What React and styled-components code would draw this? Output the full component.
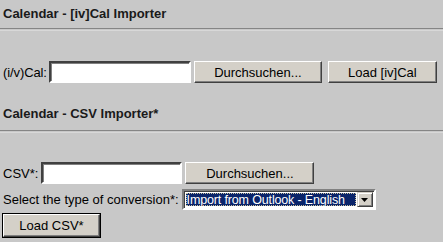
import React from 'react';
import styled, { createGlobalStyle } from 'styled-components';

const GlobalStyle = createGlobalStyle`
  html, body {
    margin: 0;
    padding: 0;
    background: #c8c8c8;
  }
  body {
    font-family: "Liberation Sans", Arial, sans-serif;
    font-size: 13px;
    color: #000;
  }
`;

const Page = styled.div`
  width: 443px;
  height: 242px;
  overflow: hidden;
  background: #c8c8c8;
`;

const Heading = styled.div`
  padding: ${p => p.top}px 3px 0;
  font-weight: bold;
  font-size: 13px;
  line-height: 16px;
  color: #1a1a1a;
`;

const Rule = styled.div`
  margin-top: ${p => p.gap}px;
  height: 1px;
  border-top: 1px solid #858585;
  border-bottom: 1px solid #d8d8d8;
`;

const Row = styled.div`
  display: flex;
  align-items: center;
  padding-left: 3px;
  margin-top: ${p => p.top}px;
  height: ${p => p.h || 22}px;
`;

const Label = styled.span`
  margin-right: ${p => p.gap || 2}px;
  white-space: nowrap;
  letter-spacing: ${p => p.tight ? '-0.1px' : '0'};
`;

const TextBox = styled.div`
  box-sizing: border-box;
  width: ${p => p.w}px;
  height: 22px;
  background: #fff;
  border-style: solid;
  border-width: 2px;
  border-color: #404040 #ffffff #ffffff #404040;
  box-shadow: inset 1px 1px 0 #808080;
`;

const Button = styled.div`
  box-sizing: border-box;
  width: ${p => p.w}px;
  height: ${p => p.h || 22}px;
  margin-left: ${p => p.gap || 0}px;
  display: flex;
  align-items: center;
  justify-content: center;
  background: #d4d0c8;
  border-top: 1px solid #ffffff;
  border-left: 1px solid #ffffff;
  border-right: 1px solid #404040;
  border-bottom: 1px solid #404040;
  box-shadow: inset -1px -1px 0 #808080;
  white-space: nowrap;
  outline: ${p => (p.primary ? '1px solid #000' : 'none')};
  outline-offset: 0;
`;

const Select = styled.div`
  box-sizing: border-box;
  width: 194px;
  height: 21px;
  display: flex;
  align-items: stretch;
  background: #fff;
  border-style: solid;
  border-width: 2px;
  border-color: #808080 #ffffff #ffffff #808080;
  box-shadow: inset 1px 1px 0 #404040;
  padding: 1px;
`;

const SelectValue = styled.div`
  flex: 1;
  margin: 1px;
  background: #0a246a;
  color: #fff;
  outline: 1px dotted #c8c0a0;
  outline-offset: -1px;
  line-height: 15px;
  padding-left: 1px;
  white-space: nowrap;
  overflow: hidden;
  font-size: 12.5px;
  letter-spacing: -0.15px;
`;

const Arrow = styled.div`
  width: 16px;
  display: flex;
  align-items: center;
  justify-content: center;
  background: #d4d0c8;
  border-top: 1px solid #d4d0c8;
  border-left: 1px solid #d4d0c8;
  border-right: 1px solid #404040;
  border-bottom: 1px solid #404040;
  box-shadow: inset 1px 1px 0 #fff, inset -1px -1px 0 #808080;
  box-sizing: border-box;
`;

export default function App() {
  return (
    <Page>
      <GlobalStyle />
      <Heading top={6}>Calendar - [iv]Cal Importer</Heading>
      <Rule gap={6} />
      <Row top={30}>
        <Label tight>(i/v)Cal:</Label>
        <TextBox w={142} />
        <Button w={128} gap={3}>Durchsuchen...</Button>
        <Button w={109} gap={6}>Load [iv]Cal</Button>
      </Row>
      <Heading top={23}>Calendar - CSV Importer*</Heading>
      <Rule gap={8} />
      <Row top={29}>
        <Label gap={3}>CSV*:</Label>
        <TextBox w={141} />
        <Button w={129} gap={3}>Durchsuchen...</Button>
      </Row>
      <Row top={5} h={21}>
        <Label gap={3}>Select the type of conversion*:</Label>
        <Select>
          <SelectValue>Import from Outlook - English</SelectValue>
          <Arrow>
            <svg width="7" height="4" viewBox="0 0 7 4">
              <path d="M0 0h7L3.5 4z" fill="#000" />
            </svg>
          </Arrow>
        </Select>
      </Row>
      <Row top={4} h={23}>
        <Button w={97} h={23} primary>Load CSV*</Button>
      </Row>
    </Page>
  );
}
